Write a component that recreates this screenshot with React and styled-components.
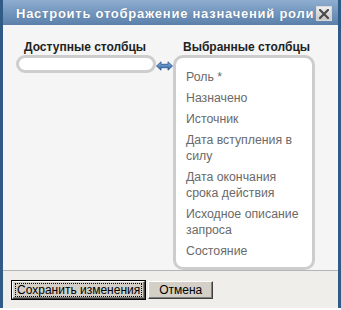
import styled, { createGlobalStyle } from "styled-components"

const GlobalStyle = createGlobalStyle`
  html, body {
    margin: 0;
    padding: 0;
    background: #ffffff;
    font-family: "Liberation Sans", Arial, sans-serif;
  }
`

const available = []
const selected = [
  "Роль *",
  "Назначено",
  "Источник",
  "Дата вступления в силу",
  "Дата окончания срока действия",
  "Исходное описание запроса",
  "Состояние",
]

const SwapArrow = () => (
  <svg width="17" height="10" viewBox="0 0 17 10">
    <defs>
      <linearGradient id="arrowFill" x1="0" y1="0" x2="0" y2="1">
        <stop offset="0" stopColor="#8fb4e0" />
        <stop offset="1" stopColor="#2c5f9e" />
      </linearGradient>
    </defs>
    <path
      d="M0.5 5 L5 0.8 L5 3.3 L12 3.3 L12 0.8 L16.5 5 L12 9.2 L12 6.7 L5 6.7 L5 9.2 Z"
      fill="url(#arrowFill)"
      stroke="#24548f"
      strokeWidth="0.8"
      strokeLinejoin="round"
    />
  </svg>
)

const CloseIcon = () => (
  <svg width="10" height="10" viewBox="0 0 10 10">
    <path d="M1 1 L9 9 M9 1 L1 9" stroke="#4a4a4a" strokeWidth="2.2" strokeLinecap="square" />
  </svg>
)

const App = () => {
  return (
    <>
      <GlobalStyle />
      <Dialog>
        <TitleBar>
          <Title>Настроить отображение назначений роли</Title>
          <CloseButton aria-label="close">
            <CloseIcon />
          </CloseButton>
        </TitleBar>
        <Body>
          <Column $width={140}>
            <Label $indent={8}>Доступные столбцы</Label>
            <ListBox $minHeight={18}>
              {available.map(item => (
                <Item key={item}>{item}</Item>
              ))}
            </ListBox>
          </Column>
          <ArrowSlot>
            <SwapArrow />
          </ArrowSlot>
          <Column $width={142}>
            <Label $indent={10}>Выбранные столбцы</Label>
            <ListBox $padded>
              {selected.map(item => (
                <Item key={item}>{item}</Item>
              ))}
            </ListBox>
          </Column>
        </Body>
        <Footer>
          <Button $focused>
            <FocusRing>Сохранить изменения</FocusRing>
          </Button>
          <Button>Отмена</Button>
        </Footer>
      </Dialog>
    </>
  )
}

const Dialog = styled.div`
  width: 341px;
  height: 308px;
  box-sizing: border-box;
  border: 3px solid #2f5b86;
  border-top: none;
  display: flex;
  flex-direction: column;
  background: #f5f5f5;
`
const TitleBar = styled.div`
  flex-shrink: 0;
  height: 25px;
  margin: 0 -3px;
  padding: 2px 6px 0 13px;
  display: flex;
  align-items: center;
  justify-content: space-between;
  background: linear-gradient(#8eadd0, #5a80ab);
  border-left: 3px solid #2f5b86;
  border-right: 3px solid #2f5b86;
  box-sizing: border-box;
`
const Title = styled.div`
  color: #ffffff;
  font-weight: bold;
  font-size: 13px;
  letter-spacing: 0.75px;
  white-space: nowrap;
  text-shadow: 0 0 1px rgba(40, 70, 110, 0.6);
`
const CloseButton = styled.div`
  flex-shrink: 0;
  width: 16px;
  height: 15px;
  box-sizing: border-box;
  border: 1px solid #d8d8d8;
  background: linear-gradient(#f0f0f0, #c6c6c6);
  display: flex;
  align-items: center;
  justify-content: center;
`
const Body = styled.div`
  flex: 1;
  display: flex;
  align-items: flex-start;
  padding: 15px 0 0 13px;
`
const Column = styled.div`
  width: ${p => p.$width}px;
  display: flex;
  flex-direction: column;
`
const Label = styled.div`
  font-weight: bold;
  font-size: 12px;
  line-height: 14px;
  color: #222222;
  padding-left: ${p => p.$indent}px;
  margin-bottom: 1px;
`
const ListBox = styled.div`
  background: #ffffff;
  border: 3px solid #cdcdcd;
  border-radius: 10px;
  min-height: ${p => p.$minHeight || 0}px;
  box-sizing: border-box;
  padding: ${p => (p.$padded ? "8px 8px 6px 10px" : "0")};
`
const Item = styled.div`
  font-size: 12.3px;
  line-height: 16px;
  padding: 2.5px 0;
  color: #6a6a6a;
`
const ArrowSlot = styled.div`
  width: 17px;
  padding-top: 21px;
  display: flex;
`
const Footer = styled.div`
  flex-shrink: 0;
  height: 33px;
  border-top: 1px solid #b5b5b5;
  background: #efeeea;
  display: flex;
  align-items: flex-start;
  gap: 3px;
  padding: 10px 0 0 9px;
`
const Button = styled.button`
  height: 18px;
  padding: 0 ${p => (p.$focused ? "2px" : "10px")};
  font-family: "Liberation Sans", Arial, sans-serif;
  font-size: 12px;
  color: #000000;
  background: #d4d0c8;
  border: 1px solid;
  border-color: #ffffff #404040 #404040 #ffffff;
  box-shadow: ${p => (p.$focused ? "0 0 0 1px #000000, inset -1px -1px 0 #808080" : "inset -1px -1px 0 #808080")};
  display: flex;
  align-items: center;
  margin: 0;
`
const FocusRing = styled.span`
  border: 1px dotted #000000;
  padding: 0 1px;
  line-height: 12px;
`

export default App
